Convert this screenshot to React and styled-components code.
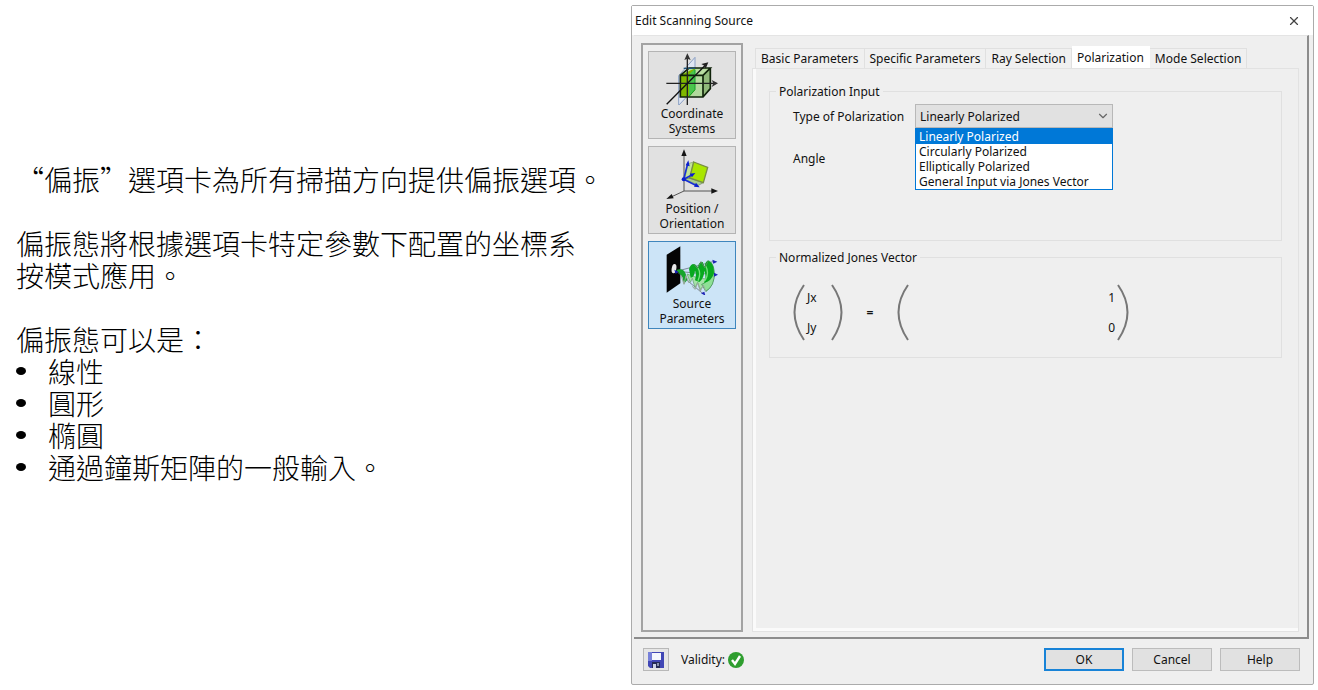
import React, { useState } from 'react';
import styled, { createGlobalStyle } from 'styled-components';
import { X, ChevronDown } from 'lucide-react';

const GlobalStyle = createGlobalStyle`
  * {
    box-sizing: border-box;
  }
  body {
    margin: 0;
    background: #ffffff;
    color: #000000;
  }
  button, select, input {
    font: inherit;
    color: inherit;
  }
`;

const Page = styled.div`
  display: grid;
  grid-template-columns: 631fr 683fr;
  min-height: 100vh;
  padding: 5px 4px 5px 0;
`;

const Notes = styled.section`
  padding: 158px 16px 0;
  font-family: "Noto Sans CJK TC", sans-serif;
  font-size: 28px;
  font-weight: 300;
  line-height: 32px;
  p {
    margin: 0 0 32px;
  }
  p:last-of-type {
    margin: 0;
  }
`;

const NoteList = styled.ul`
  list-style: none;
  margin: 0;
  padding: 0;
`;

const NoteItem = styled.li`
  display: flex;
  align-items: center;
  gap: 22px;
  &::before {
    content: "";
    width: 10px;
    height: 8px;
    border-radius: 50%;
    background: #000000;
  }
`;

const Dialog = styled.section`
  display: flex;
  flex-direction: column;
  background: #efefef;
  border: 1px solid #ababab;
  border-radius: 2px;
  font-family: "Noto Sans", sans-serif;
  font-size: 12px;
  font-weight: 400;
  line-height: 15px;
  color: #111111;
`;

const TitleBar = styled.header`
  display: flex;
  align-items: center;
  justify-content: space-between;
  height: 29px;
  padding: 0 12px 0 3px;
  background: #ffffff;
  h1 {
    margin: 0;
    font-size: 12px;
    font-weight: 400;
  }
`;

const CloseButton = styled.button`
  display: flex;
  padding: 0;
  border: none;
  background: none;
  color: #444444;
`;

const Body = styled.div`
  flex: 1;
  display: flex;
  gap: 9px;
  margin: 0 4px 0 2px;
  padding: 7px 8px 5px 7px;
  border-top: 1px solid #e4e4e4;
  border-right: 2px solid #8c8c8c;
  border-bottom: 2px solid #8c8c8c;
`;

const Sidebar = styled.nav`
  display: flex;
  flex-direction: column;
  gap: 7px;
  padding: 6px 5px;
  border: 2px solid #a3a3a3;
`;

const SideButton = styled.button`
  display: flex;
  flex-direction: column;
  align-items: center;
  gap: 1px;
  width: 88px;
  height: 88px;
  padding: 1px 0;
  background: ${({ $active }) => ($active ? '#cce4f7' : '#e1e1e1')};
  border: 1px solid ${({ $active }) => ($active ? '#3f86bd' : '#b4b4b4')};
  span {
    width: 72px;
  }
  svg {
    flex: none;
  }
`;

const TabArea = styled.div`
  flex: 1;
  display: flex;
  flex-direction: column;
  padding-top: 3px;
`;

const TabStrip = styled.div`
  display: flex;
  align-items: flex-end;
  height: 22px;
  padding-left: 3px;
`;

const Tab = styled.button`
  height: ${({ $active }) => ($active ? '22px' : '20px')};
  padding: 0 5px;
  white-space: nowrap;
  background: ${({ $active }) => ($active ? '#ffffff' : '#f0f0f0')};
  border: 1px solid ${({ $active }) => ($active ? '#ffffff' : '#e0e0e0')};
  border-bottom: none;
  border-left-width: ${({ $first }) => ($first ? '1px' : '0')};
`;

const TabPanel = styled.div`
  flex: 1;
  padding: 15px 16px;
  border: 1px solid #e2e2e2;
  box-shadow: inset 3px -3px 0 #fafafa;
`;

const Group = styled.fieldset`
  min-width: 0;
  min-height: ${({ $tall }) => ($tall ? '157px' : '108px')};
  margin: 0 0 9px;
  padding: 5px 23px 4px;
  border: 1px solid #e0e0e0;
  legend {
    margin-left: -17px;
    padding: 0 3px;
  }
`;

const Field = styled.div`
  display: grid;
  grid-template-columns: 122px minmax(0, 198px);
  align-items: center;
  height: 24px;
  margin-bottom: 18px;
`;

const SelectWrap = styled.div`
  position: relative;
  svg {
    position: absolute;
    right: 3px;
    top: 5px;
    color: #666666;
    pointer-events: none;
  }
`;

const Select = styled.select`
  display: block;
  width: 100%;
  height: 24px;
  padding: 0 4px;
  appearance: none;
  background: #e1e1e1;
  border: 1px solid #b8b8b8;
  border-radius: 0;
`;

const Options = styled.ul`
  position: absolute;
  z-index: 1;
  top: 100%;
  left: 0;
  width: 100%;
  margin: 0;
  padding: 0;
  list-style: none;
  background: #ffffff;
  border: 1px solid #0078d7;
`;

const Option = styled.li`
  padding: 0 3px;
  white-space: nowrap;
  color: ${({ $selected }) => ($selected ? '#ffffff' : 'inherit')};
  background: ${({ $selected }) => ($selected ? '#0078d7' : 'transparent')};
`;

const AngleInput = styled.input`
  width: 100%;
  height: 22px;
  border: 1px solid #b8b8b8;
`;

const Equation = styled.div`
  display: flex;
  align-items: center;
  margin-top: 14px;
`;

const Vector = styled.div`
  display: flex;
  gap: 2px;
  width: ${({ $wide }) => ($wide ? '232px' : '50px')};
  svg {
    flex: none;
  }
`;

const Entries = styled.div`
  flex: 1;
  display: flex;
  flex-direction: column;
  justify-content: space-between;
  padding: 6px 0;
  text-align: ${({ $right }) => ($right ? 'right' : 'left')};
`;

const Equals = styled.span`
  width: 54px;
  font-weight: 700;
  text-align: center;
`;

const Footer = styled.footer`
  display: flex;
  align-items: center;
  gap: 8px;
  padding: 9px 13px 13px 11px;
`;

const SaveButton = styled.button`
  display: flex;
  align-items: center;
  justify-content: center;
  width: 26px;
  height: 23px;
  padding: 0;
  background: #e6e6e6;
  border: 1px solid #b8b8b8;
`;

const Validity = styled.div`
  display: flex;
  align-items: center;
  gap: 3px;
  flex: 1;
  margin-left: 4px;
`;

const DialogButton = styled.button`
  width: 80px;
  height: 23px;
  padding: 0;
  background: #e1e1e1;
  border: ${({ $primary }) => ($primary ? '2px solid #1883d7' : '1px solid #bcbcbc')};
`;

const CoordinateIcon = () => (
  <svg width="52" height="52" viewBox="91 40 156 156" fill="none" aria-hidden="true">
    <path d="M129 108 L178 53 V145 L129 197 Z" fill="#dfe6f3" stroke="#8ba0c4" strokeWidth="3" />
    <path d="M134 107 L160 85 H224 L202 107 Z" fill="#b9dda2" />
    <path d="M202 107 L224 85 V147 L202 172 Z" fill="#91b97b" />
    <path d="M134 107 H202 V172 H134 Z" fill="#b2d99d" />
    <path d="M134 107 L178 86 V152 L160 172 H134 Z" fill="#7fb800" />
    <path d="M160 104 L178 88 V150 L160 170 Z" fill="#49c54c" />
    <path d="M134 107 L160 85 H224 L202 107 H134 V172 H202 L224 147 V85 M202 107 V172" stroke="#10230b" strokeWidth="5" />
    <path d="M178 90 V150 L160 170" stroke="#12a22a" strokeWidth="3" />
    <path d="M144 86 H178" stroke="#1e5577" strokeWidth="4" />
    <path d="M155 48 V197" stroke="#222222" strokeWidth="4" />
    <path d="M92 131 H240" stroke="#222222" strokeWidth="4" />
    <path d="M93 194 L212 74" stroke="#111111" strokeWidth="4" />
    <path d="M155 41 L146 61 L155 57 L165 61 Z" fill="#333333" />
    <path d="M247 131 L228 121 L233 131 L228 142 Z" fill="#333333" />
    <path d="M218 68 L197 73 L206 78 L210 87 Z" fill="#222222" />
  </svg>
);

const PositionIcon = () => (
  <svg width="52" height="52" viewBox="91 25 156 156" fill="none" aria-hidden="true">
    <path d="M145 40 V154 H238" stroke="#555555" strokeWidth="3" />
    <path d="M145 154 L102 174" stroke="#555555" strokeWidth="3" />
    <path d="M145 29 L137 49 H153 Z" fill="#151515" />
    <path d="M247 154 L227 146 V162 Z" fill="#151515" />
    <path d="M92 178 L108 163 L114 176 Z" fill="#151515" />
    <path d="M174 67 L157 72 L147 119 L162 115 Z" fill="#c2e39a" stroke="#7f9b6a" strokeWidth="2" />
    <path d="M162 115 L147 119 L188 137 L203 129 Z" fill="#a9ce8c" stroke="#6b7f5c" strokeWidth="2" />
    <path d="M174 67 L216 83 L203 129 L162 115 Z" fill="#a9e600" stroke="#798d45" strokeWidth="4" />
    <path d="M144 119 L156 72 M144 119 L183 138 M144 119 L170 105" stroke="#1730d4" strokeWidth="5" />
    <path d="M158 62 L150 77 L162 80 Z M192 143 L175 141 L181 129 Z M179 100 L162 102 L169 113 Z" fill="#0b20cf" />
    <circle cx="144" cy="119" r="6" fill="#0b20cf" />
  </svg>
);

const SourceIcon = () => (
  <svg width="52" height="52" viewBox="91 310 156 156" fill="none" aria-hidden="true">
    <path d="M93 345 L134 320 V431 L93 459 Z" fill="#050505" />
    <ellipse cx="115" cy="387" rx="7" ry="14" fill="#e8e8e8" transform="rotate(10 115 387)" />
    <path d="M122 395 L232 366 M122 395 L238 405 M122 395 L202 462" stroke="#555b66" strokeWidth="2" />
    <path d="M154 403 L164 428 L170 416 L178 444 L186 428 L194 450 L203 438 L212 455 Q232 440 236 407 L216 418 L190 416 Z" fill="#a5e3a8" stroke="#5f9a68" strokeWidth="2" />
    <path d="M210 455 Q238 440 236 396 Q232 362 214 364 Q229 380 222 408 Q216 428 198 434 Z" fill="#8fe096" stroke="#36854a" strokeWidth="2" />
    <path d="M122 391 Q142 383 150 402 L155 420 L145 433 L140 411 Z" fill="#16a52c" />
    <path d="M160 388 Q166 370 178 374 L186 383 Q190 365 201 367 L207 381 Q209 362 219 363 Q236 373 235 401 Q227 426 205 430 Q213 410 206 393 Q206 414 191 427 L178 422 Q183 402 178 393 Q176 413 165 414 Z" fill="#08a91f" />
    <path d="M187 385 Q197 401 187 423 M210 379 Q222 399 208 423" stroke="#75df7c" strokeWidth="4" />
    <path d="M136 407 L145 434 L151 408 L160 430 M170 440 L178 449 L186 430 L194 455 L203 436 L210 455" stroke="#9aa89c" strokeWidth="3" />
    <path d="M174 373 L185 386 L196 366 L207 384 L218 363" stroke="#578d5e" strokeWidth="3" />
    <path d="M116 390 L128 396 L120 403 Z" fill="#1520b8" />
    <path d="M245 366 L230 360 L233 372 Z M247 405 L235 399 V411 Z M209 468 L196 461 L206 456 Z" fill="#1d22b5" />
  </svg>
);

const SaveIcon = () => (
  <svg width="16" height="16" viewBox="0 0 16 16" aria-hidden="true">
    <path d="M0 0 H16 V16 H2 L0 14 Z" fill="#4147b5" />
    <path d="M0 0 H4 V9 H0 Z" fill="#7780d9" />
    <path d="M4 1 H13 V8 H4 Z" fill="#f4f6fd" />
    <path d="M4 10 H12 V16 H4 Z" fill="#252b55" />
    <path d="M5 12 H8 V16 H5 Z" fill="#cbd2e6" />
    <path d="M9 11 H11 V14 H9 Z" fill="#8892ae" />
  </svg>
);

const ValidIcon = () => (
  <svg width="16" height="16" viewBox="0 0 16 16" fill="none" role="img" aria-label="valid">
    <circle cx="8" cy="8" r="8" fill="#2f9e2f" />
    <path d="M4 8 L7 12 L12 4" stroke="#ffffff" strokeWidth="2.4" />
  </svg>
);

const Paren = ({ right }) => (
  <svg width="12" height="57" viewBox="0 0 12 57" fill="none" aria-hidden="true">
    <path d={right ? 'M1 1 Q20 28 1 56' : 'M11 1 Q-8 28 11 56'} stroke="#777777" strokeWidth="2" />
  </svg>
);

const sections = [
  { title: 'Coordinate Systems', icon: <CoordinateIcon /> },
  { title: 'Position / Orientation', icon: <PositionIcon /> },
  { title: 'Source Parameters', icon: <SourceIcon /> },
];

const tabs = [
  'Basic Parameters',
  'Specific Parameters',
  'Ray Selection',
  'Polarization',
  'Mode Selection',
];

const polarizations = [
  'Linearly Polarized',
  'Circularly Polarized',
  'Elliptically Polarized',
  'General Input via Jones Vector',
];

const PolarizationSelect = () => {
  const [value, setValue] = useState(polarizations[0]);
  const [open, setOpen] = useState(true);

  const pick = (item) => {
    setValue(item);
    setOpen(false);
  };

  return (
    <SelectWrap>
      <Select id="polarization" value={value} onChange={(e) => pick(e.target.value)}>
        {polarizations.map((item) => (
          <option key={item}>{item}</option>
        ))}
      </Select>
      <ChevronDown size={14} strokeWidth={2} />
      {open && (
        <Options role="listbox" aria-label="Type of Polarization">
          {polarizations.map((item) => (
            <Option
              key={item}
              role="option"
              aria-selected={item === value}
              $selected={item === value}
              onClick={() => pick(item)}
            >
              {item}
            </Option>
          ))}
        </Options>
      )}
    </SelectWrap>
  );
};

const App = () => {
  const [section, setSection] = useState('Source Parameters');
  const [tab, setTab] = useState('Polarization');

  return (
    <>
      <GlobalStyle />
      <Page>
        <Notes lang="zh-Hant">
          <p>“偏振”選項卡為所有掃描方向提供偏振選項。</p>
          <p>
            偏振態將根據選項卡特定參數下配置的坐標系
            <br />
            按模式應用。
          </p>
          <p>偏振態可以是：</p>
          <NoteList>
            <NoteItem>線性</NoteItem>
            <NoteItem>圓形</NoteItem>
            <NoteItem>橢圓</NoteItem>
            <NoteItem>通過鐘斯矩陣的一般輸入。</NoteItem>
          </NoteList>
        </Notes>

        <Dialog role="dialog" aria-labelledby="dialog-title">
          <TitleBar>
            <h1 id="dialog-title">Edit Scanning Source</h1>
            <CloseButton aria-label="Close">
              <X size={14} strokeWidth={2} />
            </CloseButton>
          </TitleBar>

          <Body>
            <Sidebar>
              {sections.map(({ title, icon }) => (
                <SideButton key={title} $active={title === section} onClick={() => setSection(title)}>
                  {icon}
                  <span>{title}</span>
                </SideButton>
              ))}
            </Sidebar>

            <TabArea>
              <TabStrip role="tablist">
                {tabs.map((name, index) => (
                  <Tab
                    key={name}
                    role="tab"
                    aria-selected={name === tab}
                    $active={name === tab}
                    $first={index === 0}
                    onClick={() => setTab(name)}
                  >
                    {name}
                  </Tab>
                ))}
              </TabStrip>
              <TabPanel role="tabpanel">
                <Group $tall>
                  <legend>Polarization Input</legend>
                  <Field>
                    <label htmlFor="polarization">Type of Polarization</label>
                    <PolarizationSelect />
                  </Field>
                  <Field>
                    <label htmlFor="angle">Angle</label>
                    <AngleInput id="angle" />
                  </Field>
                </Group>
                <Group>
                  <legend>Normalized Jones Vector</legend>
                  <Equation>
                    <Vector>
                      <Paren />
                      <Entries>
                        <span>Jx</span>
                        <span>Jy</span>
                      </Entries>
                      <Paren right />
                    </Vector>
                    <Equals>=</Equals>
                    <Vector $wide>
                      <Paren />
                      <Entries $right>
                        <span>1</span>
                        <span>0</span>
                      </Entries>
                      <Paren right />
                    </Vector>
                  </Equation>
                </Group>
              </TabPanel>
            </TabArea>
          </Body>

          <Footer>
            <SaveButton aria-label="Save">
              <SaveIcon />
            </SaveButton>
            <Validity>
              <span>Validity:</span>
              <ValidIcon />
            </Validity>
            <DialogButton $primary>OK</DialogButton>
            <DialogButton>Cancel</DialogButton>
            <DialogButton>Help</DialogButton>
          </Footer>
        </Dialog>
      </Page>
    </>
  );
};

export default App;
